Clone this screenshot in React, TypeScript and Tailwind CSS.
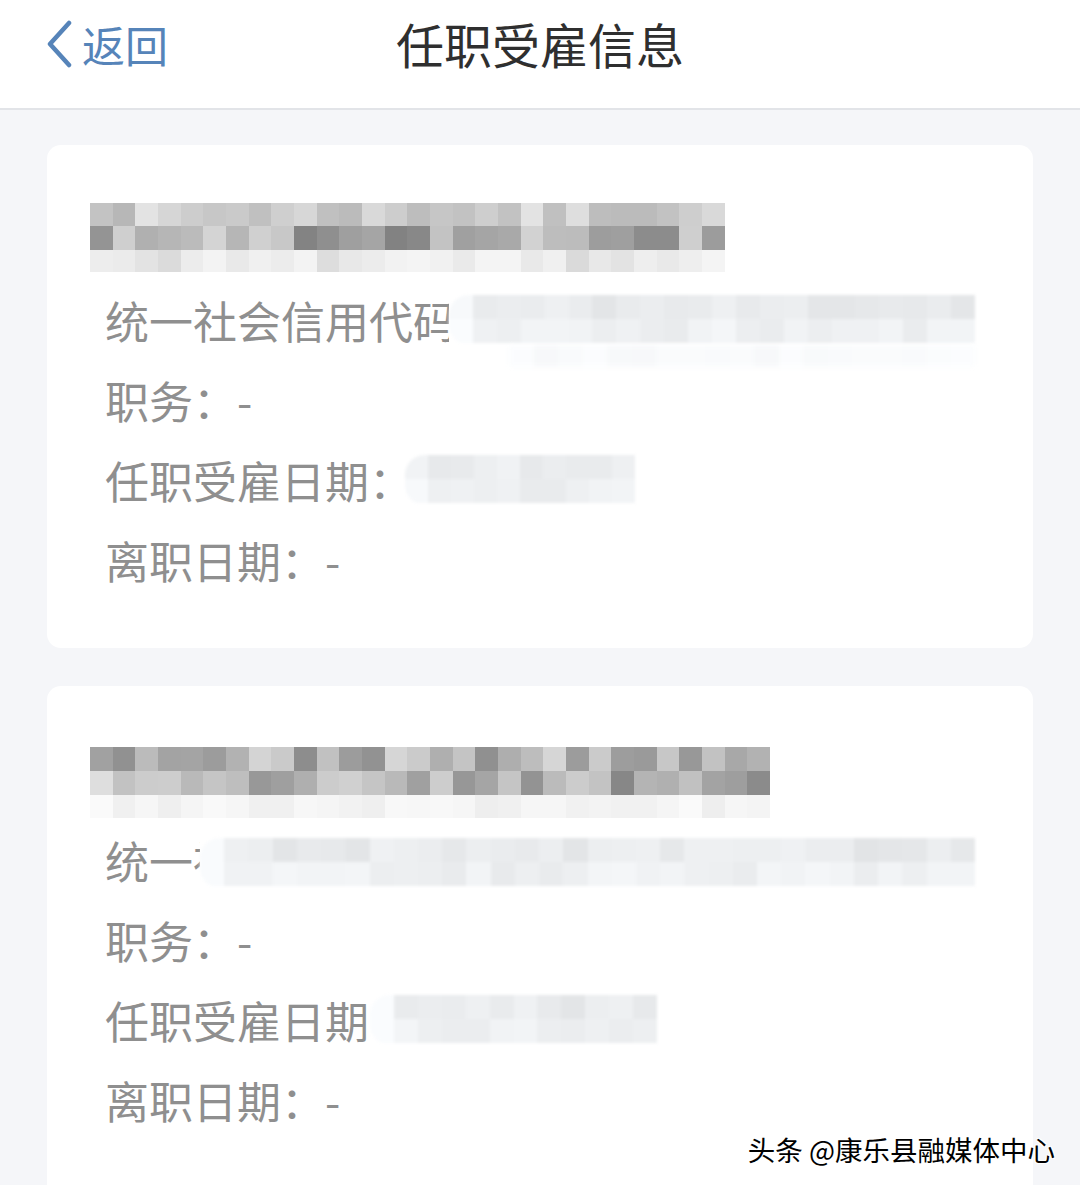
import React from 'react';

const FONT = '"Noto Sans CJK SC", "Noto Sans", sans-serif';

// small seeded rng so the mosaic stays the same on every render
const makeRng = (seed: number) => {
  let s = seed >>> 0;
  return () => {
    s = (s + 0x6d2b79f5) >>> 0;
    let t = s;
    t = Math.imul(t ^ (t >>> 15), t | 1);
    t ^= t + Math.imul(t ^ (t >>> 7), t | 61);
    return ((t ^ (t >>> 14)) >>> 0) / 4294967296;
  };
};

interface MosaicRow {
  h: number;
  min: number;
  max: number;
}

interface MosaicProps {
  rows: MosaicRow[];
  cols: number;
  seed: number;
  tint?: boolean;
  className?: string;
}

const Mosaic: React.FC<MosaicProps> = ({ rows, cols, seed, tint, className }) => {
  const rnd = makeRng(seed);
  return (
    <div className={`flex flex-col ${className ?? ''}`}>
      {rows.map((row, ri) => (
        <div key={ri} className="flex" style={{ height: row.h }}>
          {Array.from({ length: cols }).map((_, ci) => {
            const g = Math.round(row.min + rnd() * (row.max - row.min));
            const edge = ci === 0 ? 14 : 0;
            const v = Math.min(250, g + edge);
            return (
              <div
                key={ci}
                className="flex-1"
                style={{ backgroundColor: tint ? `rgb(${v},${v + 2},${v + 4})` : `rgb(${v},${v},${v})` }}
              />
            );
          })}
        </div>
      ))}
    </div>
  );
};

interface RowProps {
  label: string;
  children?: React.ReactNode;
}

const InfoRow: React.FC<RowProps> = ({ label, children }) => (
  <div className="relative h-[80px] flex items-center">
    <span className="text-[44px] leading-none text-[#8f8f8f] whitespace-nowrap">{label}</span>
    {children}
  </div>
);

// the blurred cover that hides a value and part of its label
const Cover: React.FC<{
  left: number;
  width: number;
  seed: number;
  cols: number;
  top?: number;
  trail?: boolean;
}> = ({ left, width, seed, cols, top = 15, trail }) => (
  <div className="absolute" style={{ left, width, top }}>
    <div className="bg-white h-[50px]">
      <Mosaic
        className="h-full blur-[1.5px] rounded-l-[20px] overflow-hidden"
        cols={cols}
        seed={seed}
        tint
        rows={[
          { h: 24, min: 226, max: 240 },
          { h: 24, min: 232, max: 244 },
        ]}
      />
    </div>
    {trail && (
      <Mosaic
        className="ml-[60px] blur-[2px] opacity-70"
        cols={cols - 3}
        seed={seed + 1}
        tint
        rows={[{ h: 22, min: 244, max: 250 }]}
      />
    )}
  </div>
);

const Card: React.FC<{ children: React.ReactNode; className?: string }> = ({ children, className }) => (
  <div className={`bg-white rounded-[14px] pl-[58px] pr-[40px] ${className ?? ''}`}>{children}</div>
);

export default function App() {
  return (
    <div className="relative h-[1185px] w-[1080px] overflow-hidden bg-[#f5f6f9]" style={{ fontFamily: FONT }}>
      {/* nav bar */}
      <div className="h-[110px] bg-white border-b-2 border-[#e2e4e8] grid grid-cols-[1fr_auto_1fr] items-center">
        <div className="flex items-center pl-[45px] pb-[20px] text-[#5684b9]">
          <svg width="28" height="48" viewBox="0 0 28 48" fill="none" className="mr-[9px]">
            <path d="M24 3 L5 24 L24 45" stroke="#5684b9" strokeWidth="4.5" strokeLinecap="round" strokeLinejoin="round" />
          </svg>
          <span className="text-[43px] leading-none">返回</span>
        </div>
        <div className="text-[48px] leading-none text-[#2f2f2f] pb-[22px]">任职受雇信息</div>
        <div />
      </div>

      <div className="px-[47px] pt-[35px] flex flex-col gap-[38px]">
        <Card className="pt-[58px] pb-[48px]">
          <div className="h-[77px]">
            <Mosaic
              className="-ml-[15px] w-[635px] blur-[0.6px]"
              cols={28}
              seed={7}
              rows={[
                { h: 23, min: 180, max: 228 },
                { h: 24, min: 128, max: 215 },
                { h: 22, min: 218, max: 245 },
              ]}
            />
          </div>
          <InfoRow label="统一社会信用代码：">
            <Cover left={344} width={526} cols={22} seed={11} trail />
          </InfoRow>
          <InfoRow label="职务：-" />
          <InfoRow label="任职受雇日期：">
            <Cover left={300} width={230} cols={10} seed={19} />
          </InfoRow>
          <InfoRow label="离职日期：-" />
        </Card>

        <Card className="pt-[61px] pb-[48px] h-[600px]">
          <div className="h-[73px]">
            <Mosaic
              className="-ml-[15px] w-[680px] blur-[0.6px]"
              cols={30}
              seed={23}
              rows={[
                { h: 24, min: 140, max: 215 },
                { h: 24, min: 135, max: 212 },
                { h: 23, min: 238, max: 250 },
              ]}
            />
          </div>
          <InfoRow label="统一社会信用代码：">
            <Cover left={95} width={775} cols={32} seed={31} top={18} />
          </InfoRow>
          <InfoRow label="职务：-" />
          <InfoRow label="任职受雇日期：">
            <Cover left={265} width={287} cols={12} seed={41} top={15} />
          </InfoRow>
          <InfoRow label="离职日期：-" />
        </Card>
      </div>

      {/* watermark */}
      <div className="absolute right-[25px] bottom-[22px] text-[27.5px] leading-none text-black [text-shadow:1px_1px_0_#fff,-1px_-1px_0_#fff,1px_-1px_0_#fff,-1px_1px_0_#fff]">
        头条 @康乐县融媒体中心
      </div>
    </div>
  );
}
